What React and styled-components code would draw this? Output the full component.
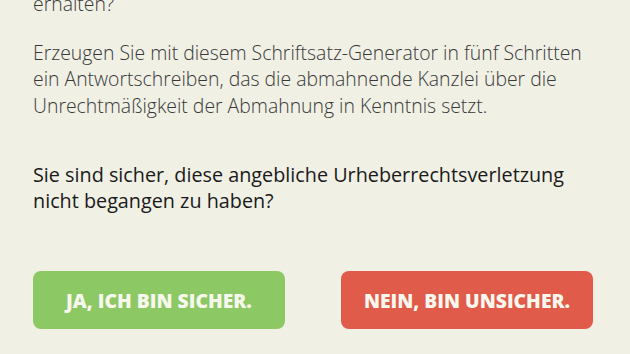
import React from 'react'
import styled, { createGlobalStyle } from 'styled-components'

const colors = {
  page: '#f0f0e5',
  text: '#383838',
  strong: '#1a1a1a',
  green: '#8cc965',
  red: '#e15b4a',
  label: '#f7f7ee',
}

const GlobalStyle = createGlobalStyle`
  html, body {
    margin: 0;
    padding: 0;
    background: ${colors.page};
    overflow: hidden;
  }
  body {
    font-family: "Open Sans", "Noto Sans", sans-serif;
  }
`

const Page = styled.main`
  width: 560px;
  padding: 0 37px 0 33px;
  margin-top: -9px;
`

const Lead = styled.p`
  margin: 0 0 22px;
  font-size: 19.4px;
  font-weight: 300;
  line-height: 26.5px;
  color: ${colors.text};
`

const Question = styled.p`
  margin: 43px 0 0;
  font-size: 19.8px;
  font-weight: 400;
  line-height: 26px;
  color: ${colors.strong};
`

const Actions = styled.div`
  display: flex;
  justify-content: space-between;
  margin-top: 57px;
`

const Choice = styled.button`
  width: 252px;
  height: 58px;
  border: 0;
  border-radius: 8px;
  background: ${(p) => (p.$tone === 'yes' ? colors.green : colors.red)};
  color: ${colors.label};
  font-family: "Open Sans", "Noto Sans", sans-serif;
  font-size: 19.3px;
  font-weight: 800;
  text-transform: uppercase;
  cursor: pointer;
`

const App = () => {
  return (
    <>
      <GlobalStyle />
      <Page>
        <Lead>erhalten?</Lead>
        <Lead>
          Erzeugen Sie mit diesem Schriftsatz-Generator in fünf Schritten ein
          Antwortschreiben, das die abmahnende Kanzlei über die
          Unrechtmäßigkeit der Abmahnung in Kenntnis setzt.
        </Lead>
        <Question>
          Sie sind sicher, diese angebliche Urheberrechtsverletzung nicht
          begangen zu haben?
        </Question>
        <Actions>
          <Choice $tone="yes">Ja, ich bin sicher.</Choice>
          <Choice $tone="no">Nein, bin unsicher.</Choice>
        </Actions>
      </Page>
    </>
  )
}

export default App
